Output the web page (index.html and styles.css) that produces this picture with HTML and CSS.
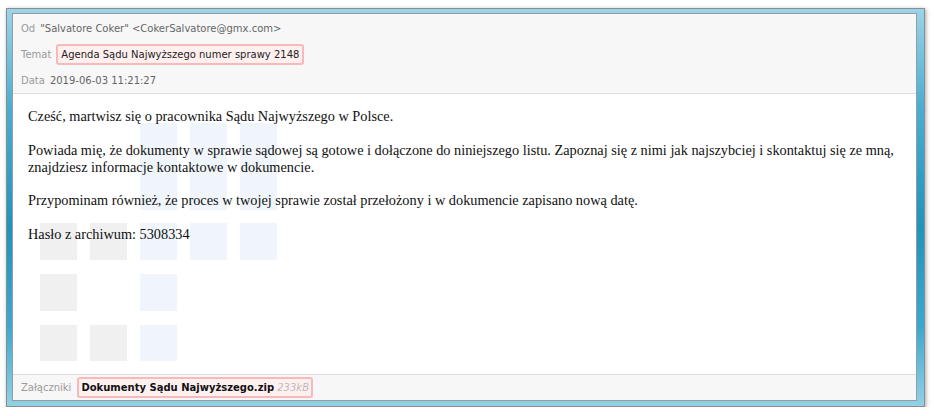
FILE: index.html
```html
<!DOCTYPE html>
<html lang="pl">
<head>
<meta charset="utf-8">
<title>Wiadomość</title>
<link rel="stylesheet" href="styles.css">
</head>
<body>
<div class="page">
  <div class="frame">
    <div class="window">
      <div class="header">
        <div class="row"><span class="label">Od</span><span class="value">"Salvatore Coker" &lt;CokerSalvatore@gmx.com&gt;</span></div>
        <div class="row"><span class="label">Temat</span><span class="tag subject">Agenda Sądu Najwyższego numer sprawy 2148</span></div>
        <div class="row"><span class="label">Data</span><span class="value">2019-06-03 11:21:27</span></div>
      </div>
      <div class="body">
        <svg class="watermark" width="270" height="270" viewBox="0 0 270 270" aria-hidden="true">
          <g fill="#eff5fa">
            <rect x="127" y="29" width="37" height="87"/>
            <rect x="177" y="29" width="37" height="87"/>
            <rect x="227" y="29" width="37" height="87"/>
            <rect x="127" y="129" width="37" height="37"/>
            <rect x="177" y="129" width="37" height="37"/>
            <rect x="227" y="129" width="37" height="37"/>
            <rect x="127" y="180" width="37" height="37"/>
            <rect x="127" y="231" width="37" height="36"/>
          </g>
          <g fill="#f0f0f0">
            <rect x="27" y="129" width="37" height="37"/>
            <rect x="77" y="129" width="37" height="37"/>
            <rect x="27" y="180" width="37" height="37"/>
            <rect x="27" y="231" width="37" height="36"/>
            <rect x="77" y="231" width="37" height="36"/>
          </g>
        </svg>
        <div class="text">
          <p>Cześć, martwisz się o pracownika Sądu Najwyższego w Polsce.</p>
          <p>Powiada mię, że dokumenty w sprawie sądowej są gotowe i dołączone do niniejszego listu. Zapoznaj się z nimi jak najszybciej i skontaktuj się ze mną, znajdziesz informacje kontaktowe w dokumencie.</p>
          <p>Przypominam również, że proces w twojej sprawie został przełożony i w dokumencie zapisano nową datę.</p>
          <p>Hasło z archiwum: 5308334</p>
        </div>
      </div>
      <div class="footer">
        <span class="label">Załączniki</span><span class="tag attach"><b>Dokumenty Sądu Najwyższego.zip</b> <i>233kB</i></span>
      </div>
    </div>
  </div>
</div>
</body>
</html>
```

FILE: styles.css
```css
html, body {
  margin: 0;
  padding: 0;
  background: #ffffff;
}

.page {
  padding: 8px 0 0 6px;
}

.frame {
  box-sizing: border-box;
  width: 919px;
  height: 399px;
  border: 1px solid #8c8c8c;
  padding: 4px 7px 5px 5px;
  background: linear-gradient(to bottom, #9ad4e8 0%, #49aed2 25%, #1f94bb 55%, #3ba9cf 80%, #92d1e6 100%);
  box-shadow: 1px 1px 4px rgba(0, 0, 0, 0.35);
}

.window {
  box-sizing: border-box;
  height: 100%;
  border: 1px solid #9a9a9a;
  background: #ffffff;
  display: flex;
  flex-direction: column;
  font-family: "DejaVu Sans", Verdana, sans-serif;
  font-size: 10px;
}

.header {
  background: #f7f7f7;
  border-bottom: 1px solid #dddddd;
  padding: 1px 0 0 8px;
}

.row {
  height: 26px;
  display: flex;
  align-items: center;
  gap: 5px;
}

.label {
  color: #9a9a9a;
}

.value {
  color: #666666;
}

.tag {
  background: #fff0f0;
  border: 2px solid #f7b9b9;
  border-radius: 3px;
  color: #222222;
}

.subject {
  padding: 3px 3px;
}

.body {
  position: relative;
  flex: 1;
  overflow: hidden;
}

.watermark {
  position: absolute;
  left: 0;
  top: 0;
}

.text {
  position: relative;
  padding: 14px 15px 0 15px;
  font-family: "Liberation Serif", "Times New Roman", serif;
  font-size: 14.3px;
  line-height: 17px;
  color: #111111;
}

.text p {
  margin: 0 0 16.5px 0;
}

.footer {
  height: 26px;
  box-sizing: border-box;
  background: #f7f7f7;
  border-top: 1px solid #dddddd;
  padding: 0 0 0 8px;
  display: flex;
  align-items: center;
  gap: 6px;
}

.attach {
  padding: 3px 2px;
}

.attach b {
  font-weight: bold;
  color: #111111;
}

.attach i {
  color: #bbbbbb;
}
```
